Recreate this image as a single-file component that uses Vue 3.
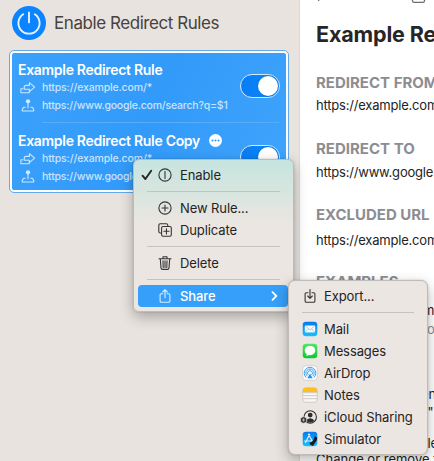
<script setup>
const rules = [
  { name: 'Example Redirect Rule', from: 'https://example.com/*', to: 'https://www.google.com/search?q=$1', more: false },
  { name: 'Example Redirect Rule Copy', from: 'https://example.com/*', to: 'https://www.google.com/search?q=$1', more: true },
]
const apps = ['Mail', 'Messages', 'AirDrop', 'Notes', 'iCloud Sharing', 'Simulator']
</script>

<template>
  <div class="window">
    <aside class="sidebar">
      <header class="enable">
        <svg class="power" viewBox="0 0 34 34">
          <circle cx="17" cy="17" r="17" fill="#0a84ff" />
          <path d="M11.2 8.2A10.6 10.6 0 1 0 22.8 8.2M17 6.400v10" fill="none" stroke="#e9f1fb" stroke-width="1.900" stroke-linecap="round" />
        </svg>
        <span class="enable-label">Enable Redirect Rules</span>
      </header>
      <section class="rules">
        <article v-for="(rule, i) in rules" :key="i" class="rule">
          <div class="rule-info">
            <div class="rule-name">
              <span>{{ rule.name }}</span>
              <svg v-if="rule.more" class="more" viewBox="0 0 13 13">
                <circle cx="6.5" cy="6.5" r="6.5" fill="#fff" />
                <g fill="#2f97f8"><circle cx="3.5" cy="6.5" r="1" /><circle cx="6.5" cy="6.5" r="1" /><circle cx="9.5" cy="6.5" r="1" /></g>
              </svg>
            </div>
            <div class="rule-line">
              <svg class="line-icon" viewBox="0 0 16 13">
                <path d="M4.200 8.200V6.400q0-2 2-2h3.200V1.700l5.200 4.500-5.200 4.500V8.200zM3.200 7.700H.9v4.100h8.300V10" />
              </svg>
              <span>{{ rule.from }}</span>
            </div>
            <div class="rule-line">
              <svg class="line-icon" viewBox="0 0 16 13">
                <circle cx="8" cy="2.3" r="2.1" class="solid" />
                <path d="M8 4v5.2M5.700 8.200H3.600l-1.300 2.200v1.600h11.400v-1.600l-1.300-2.200h-2.100" />
              </svg>
              <span>{{ rule.to }}</span>
            </div>
          </div>
          <span class="toggle"><i></i></span>
        </article>
      </section>
    </aside>

    <main class="detail">
      <svg class="toolbar" viewBox="0 0 118 4">
        <path d="M2.200 0L3.200 .8M96.500 0v.7q0 1.600 1.600 1.600h8.800q1.600 0 1.600-1.600V0" fill="none" stroke="#6d6d6d" stroke-width="1.300" />
      </svg>
      <h1>Example Redirect Rule</h1>
      <h2>REDIRECT FROM</h2>
      <p class="url first">https://example.com/*</p>
      <h2>REDIRECT TO</h2>
      <p class="url second">https://www.google.com</p>
      <h2>EXCLUDED URL</h2>
      <p class="url third">https://example.com/*</p>
      <h2>EXAMPLES</h2>
      <div class="examples">
        <p class="from">m</p>
        <p class="to">o</p>
        <p class="note-a">en</p>
        <p class="note-b">,"</p>
        <p class="note-c">ule</p>
        <p class="note-d">Change or remove the</p>
      </div>
    </main>

    <nav class="menu context">
      <div class="item enable-item">
        <svg class="check" viewBox="0 0 12 12"><path d="M1.500 6.700L4.400 10L10.200 1.800" /></svg>
        <svg class="icon" viewBox="0 0 14 14"><circle cx="7" cy="7" r="6.100" /><path d="M7 3.500v7" /></svg>
        <span>Enable</span>
      </div>
      <hr />
      <div class="item">
        <svg class="icon" viewBox="0 0 14 14"><circle cx="7" cy="7" r="6.100" /><path d="M7 4v6M4 7h6" /></svg>
        <span>New Rule...</span>
      </div>
      <div class="item">
        <svg class="icon" viewBox="0 0 14 14"><path d="M3.500 10H2.200Q.8 10 .8 8.600V2.200Q.8.800 2.200.800H8.400Q9.800.800 9.800 2.200V3.400" /><rect x="3.600" y="3.500" width="9.700" height="9.700" rx="1.500" /><path d="M8.450 5.700v5.200M5.850 8.300h5.200" /></svg>
        <span>Duplicate</span>
      </div>
      <hr />
      <div class="item">
        <svg class="icon" viewBox="0 0 14 14"><path d="M1 2.700h12M5 2.500V.7h4v1.800M2.300 2.900l.7 9q.1 1.500 1.500 1.500h5q1.400 0 1.500-1.500l.7-9M5 4.800l.2 6.700M7 4.800v6.700M9 4.800l-.2 6.700" /></svg>
        <span>Delete</span>
      </div>
      <hr />
      <div class="item selected">
        <svg class="icon" viewBox="0 0 14 14"><path d="M5 4.800H3.300q-1.200 0-1.200 1.200v6q0 1.300 1.200 1.300h7.400q1.200 0 1.200-1.300V6q0-1.200-1.200-1.200H9M7 8.800V.9M4.700 3L7 .7 9.300 3" /></svg>
        <span>Share</span>
        <svg class="chevron" viewBox="0 0 7 10"><path d="M1.500 1.200L5.300 5L1.500 8.800" /></svg>
      </div>
    </nav>

    <nav class="menu share">
      <div class="item">
        <svg class="icon export" viewBox="0 0 14 14"><path d="M5 3.800H3.300q-1.200 0-1.200 1.200v7q0 1.300 1.200 1.300h7.400q1.200 0 1.200-1.300V5q0-1.200-1.200-1.200H9M7 .5v8.700M4.700 7L7 9.300 9.300 7" /></svg>
        <span>Export...</span>
      </div>
      <hr />
      <div v-for="app in apps" :key="app" class="item">
        <svg class="app-icon" viewBox="0 0 16 16">
          <defs>
            <linearGradient id="blue" x2="0" y2="1"><stop stop-color="#0878ed" /><stop offset="1" stop-color="#16c2fb" /></linearGradient>
            <linearGradient id="green" x2="0" y2="1"><stop stop-color="#52e769" /><stop offset="1" stop-color="#0ac92c" /></linearGradient>
          </defs>
          <template v-if="app === 'Mail'">
            <rect x=".7" y=".7" width="14.600" height="14.600" rx="3.300" fill="url(#blue)" />
            <rect x="2.800" y="4.400" width="10.400" height="7.200" rx="1" fill="#f5fafc" />
            <path d="M3.200 4.800L8 9l4.800-4.200M3.200 11.200l3.300-3.400M12.800 11.200L9.500 7.800" fill="none" stroke="#9bb5c5" stroke-width=".7" />
          </template>
          <template v-else-if="app === 'Messages'">
            <rect x=".7" y=".7" width="14.600" height="14.600" rx="3.300" fill="url(#green)" />
            <path d="M8 3c3.200 0 5.300 2 5.300 4.600S11.200 12.200 8 12.200q-.8 0-1.500-.2-.9 1-2.500 1 .9-.8.800-1.800Q2.700 10 2.700 7.600C2.700 5 4.800 3 8 3z" fill="#fff" />
          </template>
          <template v-else-if="app === 'AirDrop'">
            <rect x=".7" y=".7" width="14.600" height="14.600" rx="3.300" fill="#fbfcfd" stroke="#bfbfbf" stroke-width=".6" />
            <g fill="none" stroke="#2495ea" stroke-width=".9">
              <path d="M4.200 12.500a5.800 5.800 0 1 1 7.600 0M5.200 11.100a4.100 4.100 0 1 1 5.600 0M6.300 9.800a2.400 2.400 0 1 1 3.400 0" />
            </g>
            <path d="M8 8.500l2.600 4.700H5.400z" fill="#2495ea" />
          </template>
          <template v-else-if="app === 'Notes'">
            <rect x=".7" y=".7" width="14.600" height="14.600" rx="3.300" fill="#f7f6f4" stroke="#b9b5b0" stroke-width=".6" />
            <path d="M.7 5.200V4Q.7.700 4 .7h8q3.300 0 3.300 3.300v1.200z" fill="#fdbf1d" />
            <path d="M1 5.700h14M1 8.600h14M1 11.700h14" stroke="#c2c0bd" stroke-width=".8" />
          </template>
          <template v-else-if="app === 'iCloud Sharing'">
            <circle cx="8.200" cy="7.900" r="6.200" fill="none" stroke="#2d2d2d" stroke-width="1.100" />
            <circle cx="8.200" cy="6.100" r="2.400" fill="#2d2d2d" />
            <path d="M4.100 11.700q1-2.500 4.100-2.500t4.100 2.500q-1.500 1.800-4.100 1.800t-4.100-1.800z" fill="#2d2d2d" />
            <circle cx="1.600" cy="11" r="3.200" fill="#2d2d2d" stroke="#ece6e2" stroke-width=".7" />
            <path d="M1.600 9.400v3.200M0 11h3.200" stroke="#ece6e2" stroke-width=".7" />
          </template>
          <template v-else>
            <rect x=".7" y=".7" width="14.600" height="14.600" rx="3.300" fill="url(#blue)" />
            <path d="M2.600 10h7.200M7.600 3.200l-4 8.400M6.400 3.200l4 7" fill="none" stroke="#d8f2ff" stroke-width="1.200" stroke-linecap="round" />
            <path d="M12.600 5.300l2.600 1.300-.3 2.500-4 5.900-2.900-1.500-.4-2 2.200-.4 2.200-3.200z" fill="#171b20" />
          </template>
        </svg>
        <span>{{ app }}</span>
      </div>
    </nav>
  </div>
</template>

<style>
body { margin: 0; overflow: hidden; }
</style>

<style scoped>
* { box-sizing: border-box; }
.window {
  position: relative; display: flex; width: 434px; height: 461px; overflow: hidden;
  font-family: Inter, "Liberation Sans", sans-serif; font-size: 13px; color: #242424; background: #fff;
}
.sidebar { flex: 0 0 300px; height: 461px; padding: 6px 10px 0 9px; background: #e8e3df; border-right: 1px solid #dcd8d5; }
.enable { display: flex; align-items: center; gap: 8px; height: 34px; padding-left: 3px; }
.power { width: 34px; height: 34px; }
.enable-label { font-size: 17px; letter-spacing: -0.44px; color: #46423f; white-space: nowrap; }
.rules {
  width: 278px; height: 141px; margin: 11px 0 0 1px; padding: 0 7px 0 6px; border: 2px solid #fff; border-radius: 4px;
  outline: 1px solid #64aae9; outline-offset: 0; background: linear-gradient(115deg, #3ba1fb, #329af9 50%, #3fa4fc);
}
.rule { display: flex; justify-content: space-between; height: 70px; padding-top: 8px; }
.rule + .rule { padding-top: 9px; }
.rule:first-child { background: linear-gradient(#56adfb, #56adfb) 24px 100% / 100% 1px no-repeat; }
.rule-name { display: flex; align-items: center; gap: 9px; height: 17px; font-size: 14px; font-weight: 600; letter-spacing: -0.3px; color: #fff; white-space: nowrap; }
.more { width: 13px; height: 13px; }
.rule-line { display: flex; align-items: center; gap: 6px; height: 17px; padding-left: 2px; font-size: 10.500px; font-weight: 500; letter-spacing: -0.2px; color: #c8e4fd; white-space: nowrap; }
.rule-name + .rule-line { height: 19px; letter-spacing: -0.14px; }
.line-icon { width: 16px; height: 13px; fill: none; stroke: #cde7fe; stroke-width: 1.100; stroke-linejoin: round; }
.line-icon .solid { fill: #d6ebfe; stroke: none; }
.toggle { display: flex; justify-content: flex-end; flex: none; width: 40px; height: 24px; margin: 13px -1px 0 0; padding: 1px; border: 1px solid #d5eafd; border-radius: 12px; background: linear-gradient(90deg, #0a7cf3, #0a8aff); }
.toggle i { width: 20px; height: 20px; border-radius: 50%; background: #fff; box-shadow: 0 0 2px #0060bb; }

.detail { flex: none; width: 134px; height: 461px; padding-left: 16px; overflow: hidden; white-space: nowrap; background: #fff; }
.toolbar { display: block; width: 118px; height: 4px; }
h1 { margin: 18px 0 0; height: 25px; font-size: 21.500px; line-height: 25px; font-weight: 700; letter-spacing: -0.15px; color: #262628; }
h2 { margin: 0; height: 20px; font-size: 15px; line-height: 20px; font-weight: 700; letter-spacing: 0; color: #8d8d91; }
h1 + h2 { margin-top: 26px; }
p { margin: 0; height: 18px; line-height: 18px; letter-spacing: -0.2px; }
.first { margin: 3px 0 25px; }
.second { margin: 4px 0 24px; }
.third { margin: 6px 0 23px; }
.from { margin-top: 9px; padding-left: 107px; }
.to { margin-top: 1px; padding-left: 111px; color: #8d8d91; }
.note-a { margin-top: 47px; padding-left: 105px; }
.note-b { height: 16px; padding-left: 109px; }
.note-c { margin-top: 15px; padding-left: 104px; }
.note-d { height: 16px; line-height: 14px; letter-spacing: 0; }

.menu { position: absolute; background: #ece6e2; border: 1px solid #c1bbb7; box-shadow: 0 5px 14px rgba(0, 0, 0, .28), 0 0 2px rgba(0, 0, 0, .2); }
.context { left: 133px; top: 159px; width: 161px; height: 153px; padding: 4px; border-radius: 6px; background: linear-gradient(#c6e4e0, #d9e5df 22%, #ece6e2 43%); }
.share { left: 288px; top: 280px; width: 140px; height: 175px; padding: 4px; border-radius: 7px; }
.item { display: flex; align-items: center; height: 22px; letter-spacing: -0.1px; white-space: nowrap; }
.context .item { padding-left: 20px; gap: 8px; }
.context .enable-item { padding-left: 3px; gap: 0; }
.enable-item .icon { margin: 0 8px 0 5px; }
.check { width: 12px; height: 12px; fill: none; stroke: #242424; stroke-width: 1.900; stroke-linecap: round; stroke-linejoin: round; }
.icon { width: 14px; height: 14px; fill: none; stroke: #353535; stroke-width: 1.100; stroke-linecap: round; stroke-linejoin: round; }
.menu hr { height: 1px; margin: 5px 9px; border: 0; background: #c7c2bf; }
.context .selected { width: 150px; border-radius: 4px; color: #fff; font-weight: 500; background: #369ffa; }
.selected .icon { stroke: #d9edff; }
.chevron { width: 7px; height: 10px; margin: 0 10px 0 auto; fill: none; stroke: #fff; stroke-width: 1.800; stroke-linecap: round; stroke-linejoin: round; }
.share .item { padding-left: 9px; gap: 6px; }
.share .icon { margin: 0 1px; }
.app-icon { width: 16px; height: 16px; overflow: visible; }
</style>
